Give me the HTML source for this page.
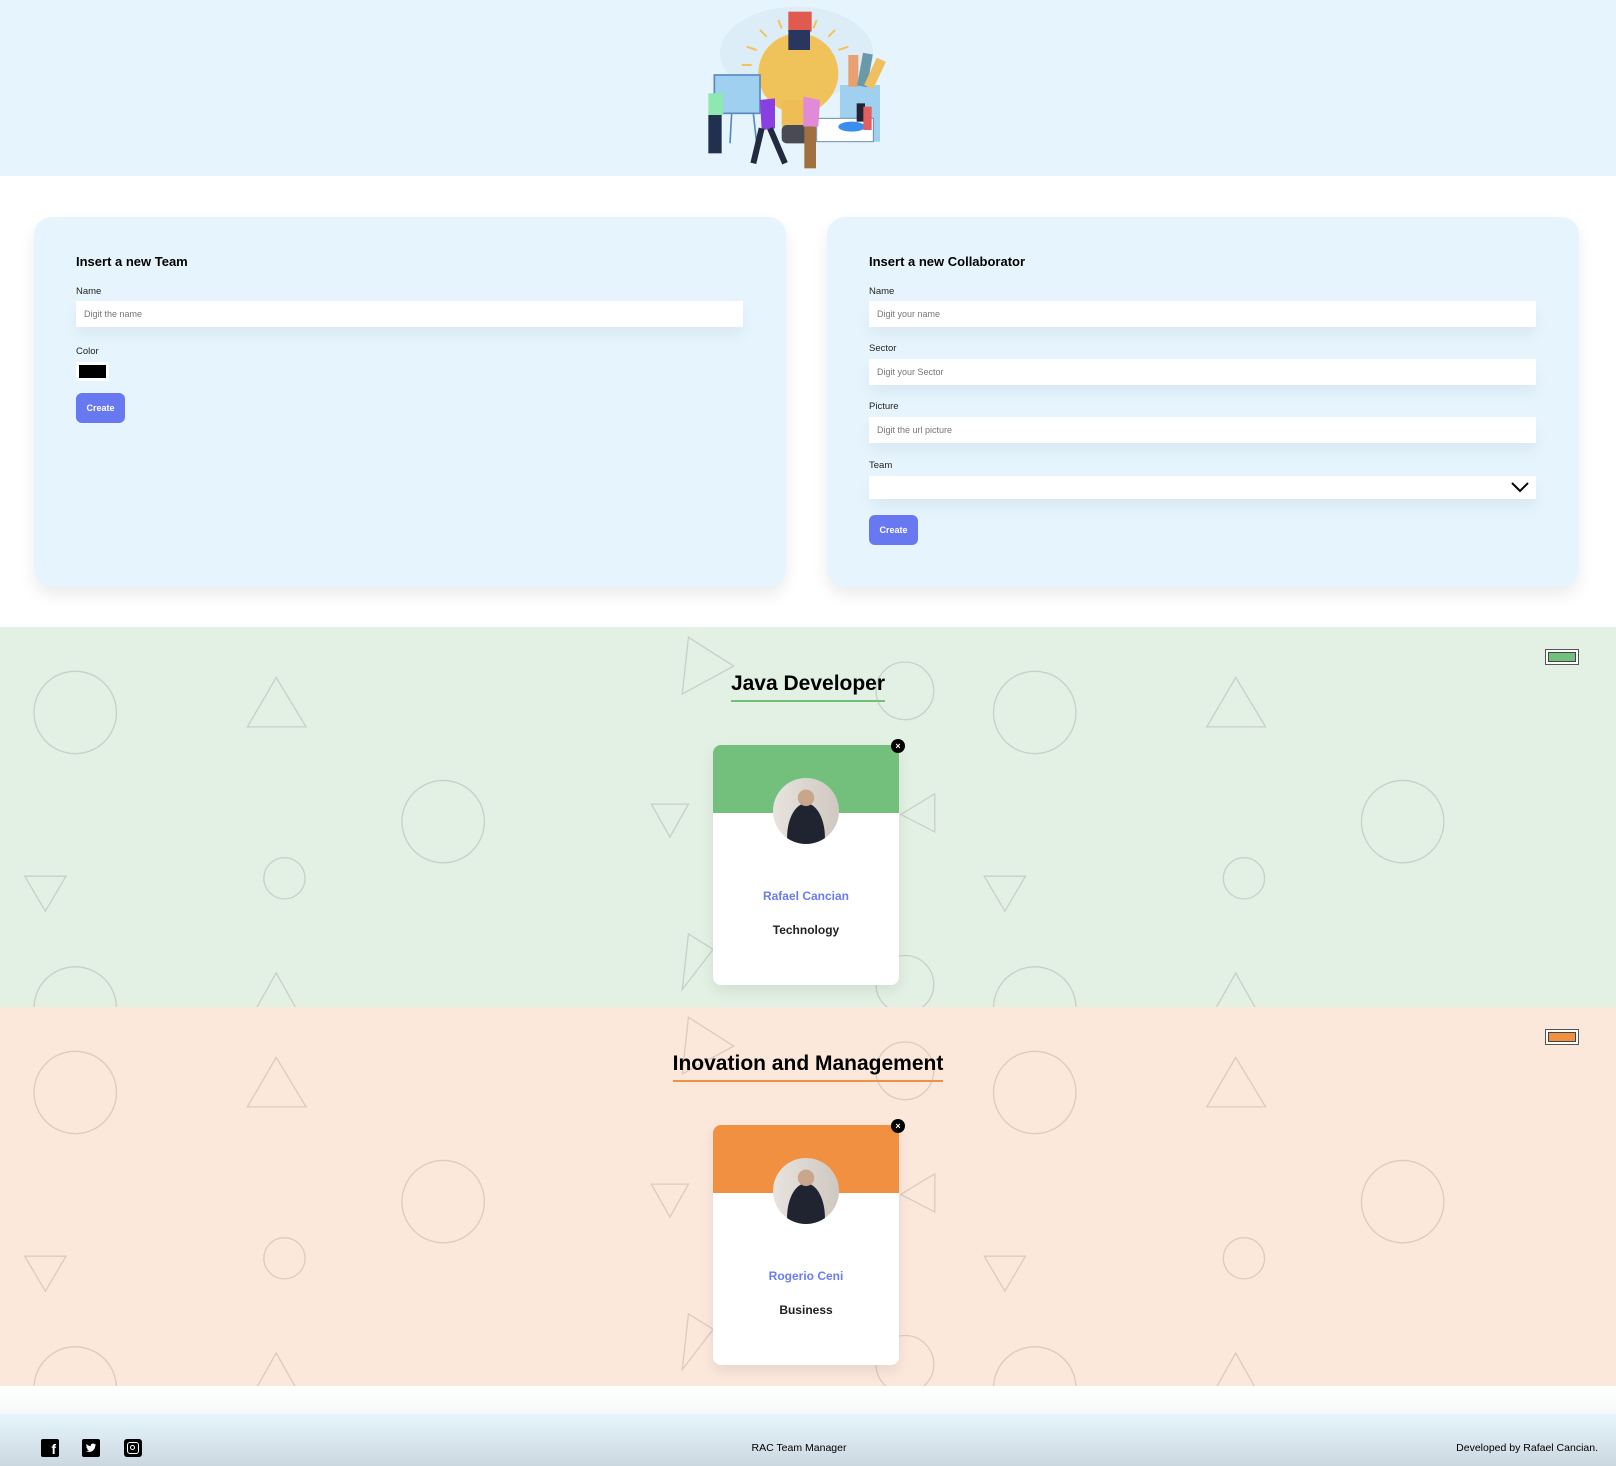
<!DOCTYPE html>
<html><head><meta charset="utf-8"><style>
*{box-sizing:border-box;margin:0;padding:0}
body{width:1616px;height:1466px;overflow:hidden;font-family:"Liberation Sans",sans-serif;background:#fff;position:relative;color:#000}
.abs{position:absolute}
header{position:absolute;left:0;top:0;width:1616px;height:176px;background:#e6f5fd}
.card{position:absolute;top:217px;height:370px;background:#e6f5fd;border-radius:18px;box-shadow:0 8px 16px rgba(0,0,0,.08)}
.card h3{position:absolute;font-size:13px;font-weight:bold}
.lbl{position:absolute;font-size:9.5px;color:#222}
.inp{position:absolute;height:26px;background:#fff;box-shadow:0 8px 14px rgba(0,40,80,.06);font-size:9px;color:#777;padding:8px 8px}
.btn{position:absolute;width:49px;height:30px;border-radius:6px;background:#6878f0;color:#fff;font-size:9px;font-weight:bold;text-align:center;line-height:30px}
.sec{position:absolute;left:0;width:1616px;overflow:hidden}
.title{position:absolute;left:0;width:1616px;text-align:center;font-size:21px;font-weight:bold}
.title span{display:inline-block;padding-bottom:4px;border-bottom:2px solid}
.tc{position:absolute;left:713px;width:186px;height:240px;background:#fff;border-radius:8px;box-shadow:0 6px 14px rgba(0,0,0,.08);overflow:hidden}
.tc .hd{height:68px}
.av{position:absolute;left:773px;width:66px;height:66px;border-radius:50%;background:radial-gradient(circle at 50% 30%,#c9a58a 0 14%,transparent 15%),radial-gradient(ellipse at 50% 90%,#1f2430 0 40%,transparent 41%),linear-gradient(90deg,#e8e3de,#cfc8c1)}
.nm{position:absolute;left:713px;width:186px;text-align:center;font-size:12px;font-weight:bold;color:#6b7cf0}
.st{position:absolute;left:713px;width:186px;text-align:center;font-size:12px;font-weight:bold;color:#222}
.x{position:absolute;left:891px;width:14px;height:14px;border-radius:50%;background:#000;color:#fff;font-size:9px;text-align:center;line-height:14px;font-weight:bold}
.sw{position:absolute;left:1545px;width:34px;height:16px;border:1px solid #555;background:#fff;padding:2px}
.sw div{width:100%;height:100%;border:1px solid #444}
footer{position:absolute;left:0;top:1414px;width:1616px;height:52px;background:linear-gradient(180deg,#e6f5fd,#ccd8df)}
</style></head><body>
<header>
<svg class="abs" style="left:660px;top:0" width="260" height="180" viewBox="0 0 780 540">
<ellipse cx="410" cy="160" rx="230" ry="140" fill="#dcedf8"/>
<g stroke="#f0c45a" stroke-width="6"><line x1="300" y1="90" x2="320" y2="110"/><line x1="260" y1="140" x2="290" y2="150"/><line x1="245" y1="195" x2="275" y2="195"/><line x1="525" y1="90" x2="505" y2="110"/><line x1="565" y1="140" x2="535" y2="150"/><line x1="355" y1="60" x2="365" y2="85"/><line x1="470" y1="60" x2="460" y2="85"/></g>
<circle cx="415" cy="220" r="120" fill="#f0c35a"/>
<rect x="365" y="300" width="100" height="80" fill="#eebd55"/>
<rect x="365" y="375" width="100" height="55" rx="15" fill="#4a4a55"/>
<rect x="163" y="225" width="137" height="115" fill="#9fd0f0" stroke="#5a8ac0" stroke-width="5"/>
<line x1="215" y1="340" x2="210" y2="430" stroke="#5a8ac0" stroke-width="5"/><line x1="280" y1="340" x2="290" y2="430" stroke="#5a8ac0" stroke-width="5"/>
<rect x="540" y="255" width="120" height="170" fill="#9fd0f0"/>
<rect x="565" y="165" width="30" height="95" fill="#e8a070"/><rect x="600" y="160" width="30" height="100" fill="#6a9aa8" transform="rotate(10 615 210)"/><rect x="630" y="175" width="30" height="90" fill="#f0c060" transform="rotate(25 645 220)"/>
<rect x="470" y="355" width="170" height="70" fill="#fff" stroke="#6a8ab0" stroke-width="3"/>
<rect x="145" y="280" width="45" height="65" fill="#8ee8b0"/><rect x="145" y="345" width="40" height="115" fill="#223050"/>
<path d="M300 300 L345 295 L345 385 L305 390Z" fill="#8a40e0"/><path d="M305 385 L280 490 M330 385 L375 490" stroke="#222a40" stroke-width="18"/>
<path d="M430 290 L480 300 L475 380 L430 380Z" fill="#e08ad8"/><rect x="433" y="380" width="35" height="125" fill="#a07040"/>
<rect x="385" y="35" width="70" height="60" fill="#e05a50"/><rect x="385" y="90" width="65" height="60" fill="#2a3560"/>
<path d="M590 310 L615 310 L615 365 L590 365Z" fill="#223"/><ellipse cx="575" cy="380" rx="40" ry="15" fill="#3a8ef0"/><rect x="610" y="320" width="25" height="70" fill="#e06060"/>
</svg>
</header>

<div class="card" style="left:34px;width:752px">
<h3 style="left:42px;top:37px">Insert a new Team</h3>
<div class="lbl" style="left:42px;top:69px">Name</div>
<div class="inp" style="left:42px;top:84px;width:667px">Digit the name</div>
<div class="lbl" style="left:42px;top:129px">Color</div>
<div class="abs" style="left:42px;top:145px;width:33px;height:19px;background:#fff;padding:3px"><div style="width:100%;height:100%;background:#000"></div></div>
<div class="btn" style="left:42px;top:176px">Create</div>
</div>

<div class="card" style="left:827px;width:752px">
<h3 style="left:42px;top:37px">Insert a new Collaborator</h3>
<div class="lbl" style="left:42px;top:69px">Name</div>
<div class="inp" style="left:42px;top:84px;width:667px">Digit your name</div>
<div class="lbl" style="left:42px;top:126px">Sector</div>
<div class="inp" style="left:42px;top:142px;width:667px">Digit your Sector</div>
<div class="lbl" style="left:42px;top:184px">Picture</div>
<div class="inp" style="left:42px;top:200px;width:667px">Digit the url picture</div>
<div class="lbl" style="left:42px;top:243px">Team</div>
<div class="inp" style="left:42px;top:259px;width:667px;height:23px"></div>
<svg class="abs" style="left:684px;top:265px" width="18" height="11"><path d="M1 1 L9 9 L17 1" stroke="#000" stroke-width="2" fill="none"/></svg>
<div class="btn" style="left:42px;top:298px">Create</div>
</div>

<!-- section 1 -->
<div class="sec" style="top:627px;height:380px;background:#e3f1e4">
<svg width="1616" height="380" viewBox="0 0 1568 369" preserveAspectRatio="none" fill="none" stroke="#c8d0c8" stroke-width="1.3">
<g id="p1"><circle cx="73" cy="83" r="40"/><path d="M268 49 L297 97 L240 97Z"/><circle cx="430" cy="189" r="40"/><circle cx="276" cy="244" r="20"/><path d="M24 242 L64 242 L44 276Z"/><circle cx="73" cy="370" r="40"/><path d="M268 336 L290 375 L246 375Z"/>
<path d="M668 10 L712 38 L662 65Z"/><circle cx="878" cy="62" r="28"/><path d="M632 172 L668 172 L650 204Z"/><path d="M907 162 L874 182 L907 199Z"/><path d="M668 298 L692 313 L662 352Z"/><circle cx="878" cy="347" r="28"/></g>
<g transform="translate(931 0)"><circle cx="73" cy="83" r="40"/><path d="M268 49 L297 97 L240 97Z"/><circle cx="430" cy="189" r="40"/><circle cx="276" cy="244" r="20"/><path d="M24 242 L64 242 L44 276Z"/><circle cx="73" cy="370" r="40"/><path d="M268 336 L290 375 L246 375Z"/></g>
</svg>
</div>
<div class="title" style="top:672px"><span style="border-color:#72c07c">Java Developer</span></div>
<div class="sw" style="top:649px"><div style="background:#72c07c"></div></div>
<div class="tc" style="top:745px"><div class="hd" style="background:#72c07c"></div></div>
<div class="av" style="top:778px"></div>
<div class="nm" style="top:889px">Rafael Cancian</div>
<div class="st" style="top:923px">Technology</div>
<div class="x" style="top:739px">×</div>

<!-- section 2 -->
<div class="sec" style="top:1007px;height:379px;background:#fbe8db">
<svg width="1616" height="380" viewBox="0 0 1568 369" preserveAspectRatio="none" fill="none" stroke="#dccbc0" stroke-width="1.3">
<use href="#p1"/>
<g transform="translate(931 0)"><circle cx="73" cy="83" r="40"/><path d="M268 49 L297 97 L240 97Z"/><circle cx="430" cy="189" r="40"/><circle cx="276" cy="244" r="20"/><path d="M24 242 L64 242 L44 276Z"/><circle cx="73" cy="370" r="40"/><path d="M268 336 L290 375 L246 375Z"/></g>
</svg>
</div>
<div class="title" style="top:1052px"><span style="border-color:#f09040">Inovation and Management</span></div>
<div class="sw" style="top:1029px"><div style="background:#f09040"></div></div>
<div class="tc" style="top:1125px"><div class="hd" style="background:#f09040"></div></div>
<div class="av" style="top:1158px"></div>
<div class="nm" style="top:1269px">Rogerio Ceni</div>
<div class="st" style="top:1303px">Business</div>
<div class="x" style="top:1119px">×</div>

<div class="abs" style="left:0;top:1386px;width:1616px;height:28px;background:linear-gradient(180deg,#fff,#f6f8f9)"></div>
<footer>
<div class="abs" style="left:41px;top:25px;width:18px;height:18px;background:#000;border-radius:2px;color:#fff;font-weight:bold;font-size:14px;text-align:right;padding-right:3px;line-height:20px">f</div>
<svg class="abs" style="left:82px;top:25px" width="18" height="18" viewBox="0 0 18 18"><rect width="18" height="18" rx="2" fill="#000"/><path d="M14 5.5c-.4.2-.8.3-1.2.3.4-.3.8-.7.9-1.1-.4.2-.9.4-1.3.5a2.1 2.1 0 0 0-3.6 1.9C7.100 7 5.600 6.200 4.600 5c-.6 1 -.3 2.200.6 2.800-.3 0-.6-.1-.9-.2 0 1 .7 1.900 1.700 2.100-.3.1-.6.1-.9 0 .3.9 1.100 1.500 2 1.500A4.200 4.200 0 0 1 4 12c1 .6 2 .9 3.200.9 3.900 0 6-3.200 6-6v-.3c.4-.3.7-.7.8-1.100z" fill="#fff"/></svg>
<div class="abs" style="left:124px;top:25px;width:18px;height:18px;background:#000;border-radius:3px"><div style="margin:3px;width:12px;height:12px;border:1.5px solid #fff;border-radius:3px"><div style="margin:2px;width:5px;height:5px;border:1.3px solid #fff;border-radius:50%"></div></div></div>
<div class="abs" style="left:0;top:28px;width:1598px;text-align:center;font-size:10.5px">RAC Team Manager</div>
<div class="abs" style="right:18px;top:28px;font-size:10.5px">Developed by Rafael Cancian.</div>
</footer>
</body></html>
